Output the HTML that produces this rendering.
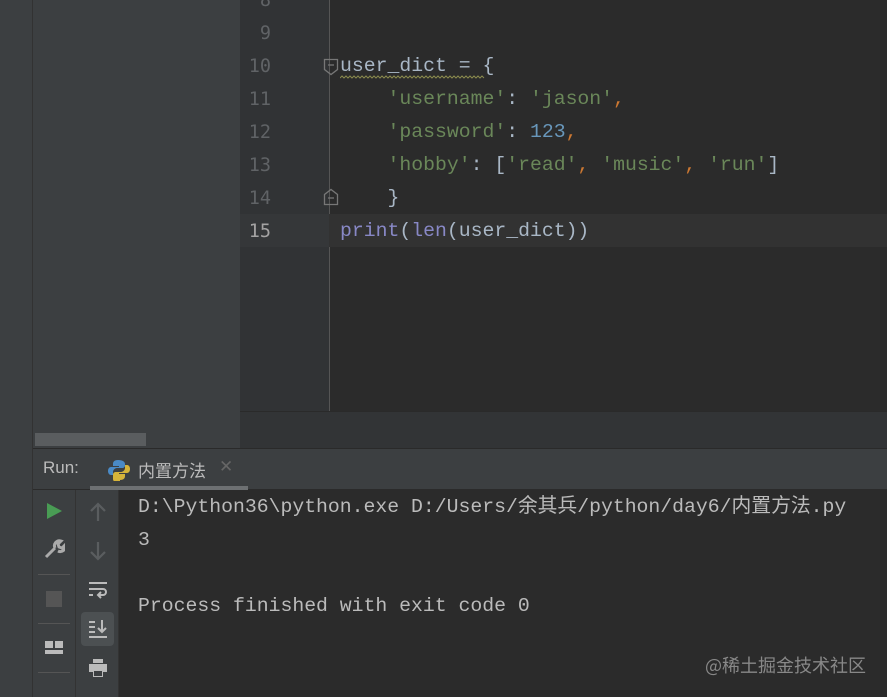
<!DOCTYPE html>
<html><head><meta charset="utf-8"><style>
*{margin:0;padding:0;box-sizing:border-box}
body{width:887px;height:697px;overflow:hidden;background:#2b2b2b;position:relative;font-family:"Liberation Mono","Noto Sans CJK SC",monospace}
.a{position:absolute}
.code{font-size:19.8px;white-space:pre;line-height:33px;height:33px}
.ln{font-size:18.5px;color:#606366;width:42px;text-align:right;left:229px;line-height:33px;font-family:"DejaVu Sans Mono",monospace}
.s{color:#6a8759}.n{color:#6897bb}.o{color:#cc7832}.d{color:#a9b7c6}.b{color:#8888c6}
.con{font-size:19.8px;color:#bbbbbb;white-space:pre;line-height:33px;left:138px}
</style></head><body>
<div class="a" style="left:0;top:0;width:33px;height:697px;background:#3c3f41;border-right:1px solid #323232"></div>
<div class="a" style="left:33px;top:0;width:207px;height:448px;background:#3c3f41"></div>
<div class="a" style="left:35px;top:433px;width:111px;height:13px;background:#5a5d5f"></div>
<div class="a" style="left:240px;top:0;width:90px;height:411px;background:#313335"></div>
<div class="a" style="left:329px;top:0;width:1px;height:411px;background:#555"></div>
<div class="a" style="left:240px;top:411px;width:647px;height:37px;background:#323436;border-top:1px solid #2a2a2a"></div>
<div class="a" style="left:240px;top:214px;width:647px;height:33px;background:#323232"></div>
<div class="a" style="left:240px;top:214px;width:89px;height:33px;background:#353739"></div>
<div class="a ln" style="top:-16px">8</div>
<div class="a ln" style="top:17px">9</div>
<div class="a ln" style="top:50px">10</div>
<div class="a ln" style="top:83px">11</div>
<div class="a ln" style="top:116px">12</div>
<div class="a ln" style="top:149px">13</div>
<div class="a ln" style="top:182px">14</div>
<div class="a ln" style="top:215px;color:#a4a3a3">15</div>
<svg class="a" style="left:323px;top:58px" width="16" height="18"><path d="M1.5 1.5h13v10l-6.5 5l-6.5-5z" fill="none" stroke="#777" stroke-width="1.3"/><path d="M5 7h6" stroke="#777" stroke-width="1.3"/></svg>
<svg class="a" style="left:323px;top:188px" width="16" height="18"><path d="M1.5 16.5h13v-10l-6.5-5l-6.5 5z" fill="none" stroke="#777" stroke-width="1.3"/><path d="M5 10h6" stroke="#777" stroke-width="1.3"/></svg>
<div class="a code d" style="left:340px;top:50px">user_dict = {</div>
<svg class="a" style="left:340px;top:75px" width="154" height="5"><path d="M0 3 l2-2 2 2 2-2 2 2 2-2 2 2 2-2 2 2 2-2 2 2 2-2 2 2 2-2 2 2 2-2 2 2 2-2 2 2 2-2 2 2 2-2 2 2 2-2 2 2 2-2 2 2 2-2 2 2 2-2 2 2 2-2 2 2 2-2 2 2 2-2 2 2 2-2 2 2 2-2 2 2 2-2 2 2 2-2 2 2 2-2 2 2 2-2 2 2 2-2 2 2 2-2 2 2 2-2 2 2 2-2 2 2 2-2 2 2 2-2 2 2 2-2 2 2 2-2 2 2 2-2 2 2 2-2 2 2 2-2 2 2 2-2 2 2" fill="none" stroke="#8a8a4e" stroke-width="1"/></svg>
<div class="a code d" style="left:340px;top:83px">    <span class="s">'username'</span>: <span class="s">'jason'</span><span class="o">,</span></div>
<div class="a code d" style="left:340px;top:116px">    <span class="s">'password'</span>: <span class="n">123</span><span class="o">,</span></div>
<div class="a code d" style="left:340px;top:149px">    <span class="s">'hobby'</span>: [<span class="s">'read'</span><span class="o">,</span> <span class="s">'music'</span><span class="o">,</span> <span class="s">'run'</span>]</div>
<div class="a code d" style="left:340px;top:182px">    }</div>
<div class="a code d" style="left:340px;top:215px"><span class="b">print</span>(<span class="b">len</span>(user_dict))</div>
<div class="a" style="left:33px;top:448px;width:854px;height:249px;background:#2b2b2b;border-top:1px solid #2a2a2a"></div>
<div class="a" style="left:33px;top:449px;width:854px;height:40px;background:#3c3f41"></div>
<div class="a" style="left:43px;top:458px;font:17px 'Liberation Sans',sans-serif;color:#bbb">Run:</div>
<svg class="a" style="left:108px;top:459px" width="22" height="22"><path d="M10 1c-4 0-5 2-5 4v2h6v1H3c-2 0-3 2-3 4s1 4 3 4h2v-3c0-2 2-4 4-4h5c2 0 3-1 3-3V5c0-2-2-4-7-4z" fill="#4a8ac6"/><path d="M12 21c4 0 5-2 5-4v-2h-6v-1h8c2 0 3-2 3-4s-1-4-3-4h-2v3c0 2-2 4-4 4H8c-2 0-3 1-3 3v4c0 2 2 4 7 4z" fill="#d6b43a"/></svg>
<div class="a" style="left:138px;top:457px;font:17px 'Noto Sans CJK SC',sans-serif;color:#bbb">内置方法</div>
<div class="a" style="left:219px;top:457px;font:17px 'Liberation Sans',sans-serif;color:#666">✕</div>
<div class="a" style="left:90px;top:486px;width:158px;height:4px;background:#6d7072"></div>
<div class="a" style="left:33px;top:490px;width:85px;height:207px;background:#3c3f41"></div>
<div class="a" style="left:75px;top:490px;width:1px;height:207px;background:#333"></div>
<div class="a" style="left:118px;top:490px;width:1px;height:207px;background:#333"></div>
<svg class="a" style="left:45px;top:502px" width="18" height="18"><path d="M2 1l15 8-15 8z" fill="#499c54"/></svg>
<svg class="a" style="left:43px;top:538px" width="22" height="22"><path d="M3 19l9-9M12 10a5 5 0 0 1 6-7l-3 3 1 3 3 1 3-3a5 5 0 0 1-7 6" stroke="#aaa" stroke-width="3" fill="none"/></svg>
<div class="a" style="left:38px;top:574px;width:32px;height:1px;background:#555"></div>
<div class="a" style="left:46px;top:591px;width:16px;height:16px;background:#555"></div>
<div class="a" style="left:38px;top:623px;width:32px;height:1px;background:#555"></div>
<div class="a" style="left:45px;top:641px;width:8px;height:7px;background:#bbb"></div><div class="a" style="left:55px;top:641px;width:8px;height:7px;background:#bbb"></div><div class="a" style="left:45px;top:650px;width:18px;height:4px;background:#bbb"></div>
<div class="a" style="left:38px;top:672px;width:32px;height:1px;background:#555"></div>
<svg class="a" style="left:87px;top:501px" width="22" height="22"><path d="M11 20V3M4 10l7-7 7 7" stroke="#5a5d5f" stroke-width="2.2" fill="none"/></svg>
<svg class="a" style="left:87px;top:540px" width="22" height="22"><path d="M11 2v17M4 12l7 7 7-7" stroke="#5a5d5f" stroke-width="2.2" fill="none"/></svg>
<svg class="a" style="left:87px;top:580px" width="22" height="22"><path d="M2 3h18M2 9h14a3 3 0 0 1 0 6h-4M2 15h4M14 12l-3 3 3 3" stroke="#bbb" stroke-width="2" fill="none"/></svg>
<div class="a" style="left:81px;top:612px;width:33px;height:34px;background:#4c5052;border-radius:4px"></div>
<svg class="a" style="left:87px;top:618px" width="22" height="22"><path d="M2 4h6M2 9h6M2 14h6M2 19h18M15 2v12M11 10l4 4 4-4" stroke="#bbb" stroke-width="2" fill="none"/></svg>
<svg class="a" style="left:87px;top:657px" width="22" height="22"><path d="M6 2h10v4H6zM2 7h18v8H2zM6 12h10v8H6z" fill="#bbb"/><path d="M7 14h8v5H7z" fill="#3c3f41"/></svg>
<div class="a con" style="top:491px">D:\Python36\python.exe D:/Users/余其兵/python/day6/内置方法.py</div>
<div class="a con" style="top:524px">3</div>
<div class="a con" style="top:590px">Process finished with exit code 0</div>
<div class="a" style="left:705px;top:652px;font:18px 'Noto Sans CJK SC',sans-serif;color:#888">@稀土掘金技术社区</div>
</body></html>
